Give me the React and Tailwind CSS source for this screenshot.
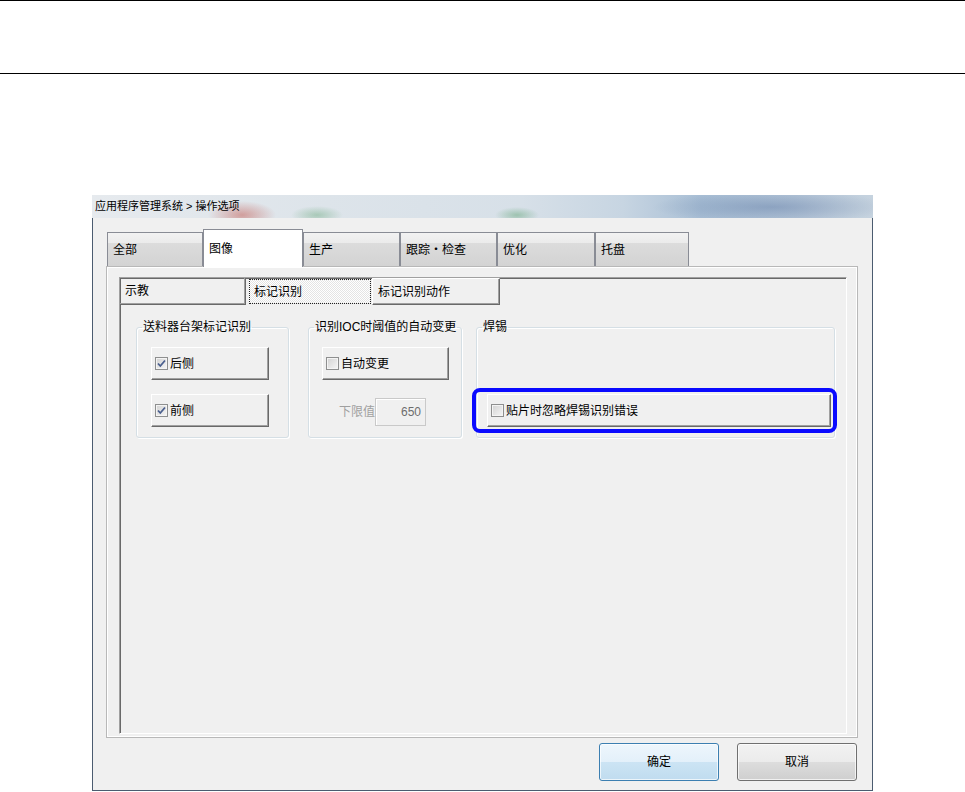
import React from "react";
import clsx from "clsx";

const tabs = [
  { label: "全部", w: "w-[96px]" },
  { label: "图像", w: "w-[100px]", active: true },
  { label: "生产", w: "w-[97px]" },
  { label: "跟踪・检查", w: "w-[97px]" },
  { label: "优化", w: "w-[98px]" },
  { label: "托盘", w: "w-[94px]" },
];

const CheckBox = ({ checked }) => (
  <span className="flex h-[13px] w-[13px] shrink-0 items-center justify-center border border-[#8e8f8f] bg-[linear-gradient(135deg,#d2d2d2,#f6f6f6)] shadow-[inset_0_0_0_1px_#f4f4f4]">
    {checked && (
      <svg width="11" height="11" viewBox="0 0 11 11">
        <path
          d="M2 5.5 L4.3 8 L9 2.5"
          fill="none"
          stroke="#4a5f8e"
          strokeWidth="1.8"
        />
      </svg>
    )}
  </span>
);

// pushlike checkbox, classic raised look
const PushCheck = ({ label, checked, className }) => (
  <div
    className={clsx(
      "flex h-[33px] items-center gap-[2px] border border-t-white border-l-white border-r-[#696969] border-b-[#696969] bg-[#f0f0f0] pl-[3px] text-[12px] shadow-[inset_-1px_-1px_0_#a0a0a0]",
      className
    )}
  >
    <CheckBox checked={checked} />
    <span>{label}</span>
  </div>
);

const Group = ({ title, className, children }) => (
  <fieldset
    className={clsx(
      "h-[118px] rounded-[3px] border border-[#d5dfe5] shadow-[inset_1px_1px_0_#fff,1px_1px_0_#fff]",
      className
    )}
  >
    <legend className="ml-[5px] px-[1px] text-[12px] leading-[14px]">
      {title}
    </legend>
    {children}
  </fieldset>
);

const WinButton = ({ label, primary }) => (
  <button
    className={clsx(
      "flex h-[38px] w-[120px] items-center justify-center rounded-[3px] border text-[12px] shadow-[inset_0_0_0_1px_rgba(255,255,255,0.7)]",
      primary
        ? "border-[#3c7fb1] bg-[linear-gradient(to_bottom,#eef6fc_0%,#e3f0fa_50%,#cce4f4_50%,#c0dcef_100%)]"
        : "border-[#707070] bg-[linear-gradient(to_bottom,#f2f2f2_0%,#ebebeb_50%,#dddddd_50%,#cfcfcf_100%)]"
    )}
  >
    {label}
  </button>
);

export default function App() {
  return (
    <div className="h-[792px] w-[965px] overflow-hidden bg-white font-['Liberation_Sans','Noto_Sans_CJK_SC',sans-serif] text-black">
      <div className="h-px bg-black" />
      <div className="h-[72px]" />
      <div className="h-px bg-black" />
      <div className="h-[121px]" />

      <div className="ml-[92px] w-[781px]">
        {/* title bar (blurred aero glass) */}
        <div className="flex h-[23px] items-center pl-[3px] text-[11px] bg-[radial-gradient(ellipse_34px_14px_at_150px_20px,rgba(190,70,60,0.45),transparent),radial-gradient(ellipse_26px_9px_at_225px_20px,rgba(70,150,90,0.35),transparent),radial-gradient(ellipse_22px_8px_at_425px_20px,rgba(70,150,90,0.4),transparent),radial-gradient(ellipse_120px_16px_at_680px_12px,rgba(70,100,150,0.35),transparent),linear-gradient(to_right,#e6eaee_0%,#dde4ea_30%,#d7e0e8_55%,#c7d5e2_68%,#a9bfd5_78%,#b5c6d8_90%,#c6d3df_100%)]">
          应用程序管理系统 &gt; 操作选项
        </div>

        {/* client area */}
        <div className="flex h-[573px] flex-col border-x border-b border-[#4b5c70] bg-[#f0f0f0]">
          {/* main tabs */}
          <div className="mt-[11px] flex h-[37px] items-end pl-[14px]">
            {tabs.map((t) =>
              t.active ? (
                <div
                  key={t.label}
                  className={clsx(
                    "relative z-10 -mb-px flex h-[38px] items-start border-x border-t border-[#898c95] bg-white pl-[5px] pt-[10px] text-[12px]",
                    t.w
                  )}
                >
                  {t.label}
                </div>
              ) : (
                <div
                  key={t.label}
                  className={clsx(
                    "flex h-[34px] items-center border-x border-t border-[#898c95] bg-[linear-gradient(to_bottom,#f2f2f2_0%,#ebebeb_30%,#dcdcdc_30%,#d3d3d3_100%)] pl-[5px] text-[12px]",
                    t.w
                  )}
                >
                  {t.label}
                </div>
              )
            )}
          </div>

          {/* tab page */}
          <div className="ml-[13px] h-[472px] w-[752px] border border-[#b8b8b8] bg-[#f0f0f0] shadow-[inset_1px_1px_0_#fff,inset_-1px_-1px_0_#fff]">
            <div className="ml-[12px] mt-[10px] h-[457px] w-[728px] border border-t-[#a0a0a0] border-l-[#a0a0a0] border-r-white border-b-white shadow-[inset_1px_1px_0_#696969]">
              {/* sub tabs */}
              <div className="flex h-[27px]">
                <div className="flex w-[126px] items-center border-r border-b border-[#696969] pl-[5px] text-[12px] shadow-[inset_-1px_-1px_0_#a0a0a0]">
                  示教
                </div>
                <div className="w-[126px] py-[1px] pl-[3px] pr-[1px]">
                  <div className="flex h-full items-center border border-dotted border-[#222] bg-[repeating-conic-gradient(#ffffff_0_25%,#e4e4e4_0_50%)] bg-size-[2px_2px] pl-[4px] text-[12px]">
                    标记识别
                  </div>
                </div>
                <div className="flex w-[128px] items-center border-r border-b border-l border-t border-[#696969] border-t-white border-l-white pl-[5px] text-[12px] shadow-[inset_-1px_-1px_0_#a0a0a0]">
                  标记识别动作
                </div>
              </div>

              {/* groups */}
              <div className="mt-[15px] flex items-start pl-[16px]">
                <Group title="送料器台架标记识别" className="w-[153px]">
                  <div className="flex flex-col gap-[14px] pl-[14px] pt-[13px]">
                    <PushCheck label="后侧" checked className="w-[118px]" />
                    <PushCheck label="前侧" checked className="w-[118px]" />
                  </div>
                </Group>

                <Group
                  title="识别IOC时阈值的自动变更"
                  className="ml-[19px] w-[154px]"
                >
                  <div className="pl-[13px] pt-[13px]">
                    <PushCheck label="自动变更" className="w-[127px]" />
                    <div className="mt-[18px] flex items-center pl-[17px]">
                      <span className="w-[36px] text-[12px] text-[#a0a0a0]">
                        下限值
                      </span>
                      <div className="flex h-[28px] w-[51px] items-center justify-end border border-[#c9c9c9] bg-[#f0f0f0] pr-[4px] text-[12px] text-[#6d6d6d] shadow-[inset_1px_1px_0_#fff]">
                        650
                      </div>
                    </div>
                  </div>
                </Group>

                <Group title="焊锡" className="ml-[14px] w-[359px]">
                  <div className="pl-[10px] pt-[60px]">
                    <div className="relative w-[344px]">
                      <PushCheck label="贴片时忽略焊锡识别错误" />
                      <div className="absolute -bottom-[6px] -left-[15px] -right-[6px] -top-[6px] rounded-[8px] border-4 border-[#0a0aff]" />
                    </div>
                  </div>
                </Group>
              </div>
            </div>
          </div>

          {/* dialog buttons */}
          <div className="mt-[5px] flex justify-end gap-[18px] pr-[15px]">
            <WinButton label="确定" primary />
            <WinButton label="取消" />
          </div>
        </div>
      </div>
    </div>
  );
}
